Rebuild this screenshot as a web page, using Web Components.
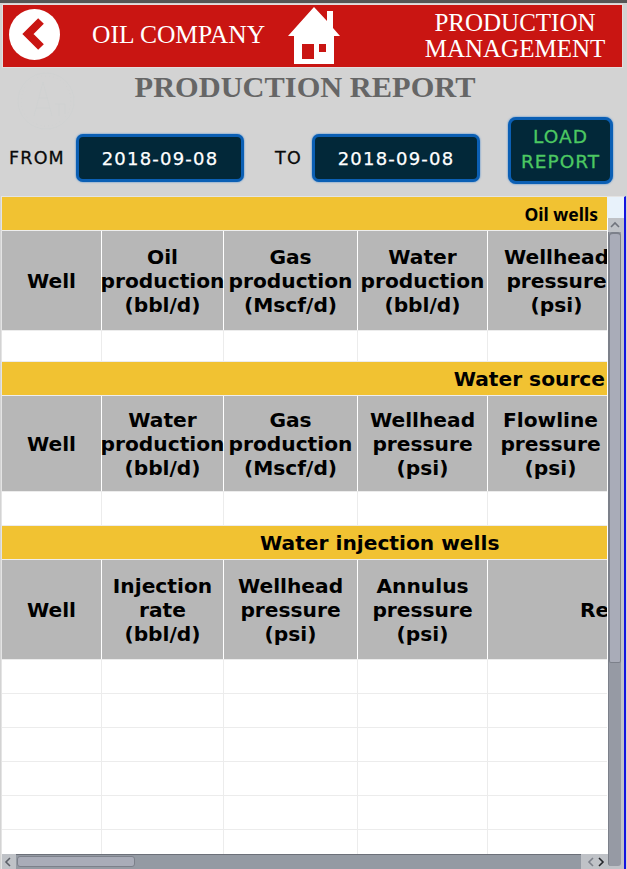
<!DOCTYPE html>
<html>
<head>
<meta charset="utf-8">
<style>
  html, body { margin: 0; padding: 0; height: 869px; overflow: hidden; background: #d3d3d3; }
</style>
</head>
<body>
<report-app></report-app>
<script>
class TopBar extends HTMLElement {
  constructor() {
    super();
    this.attachShadow({mode:'open'}).innerHTML = `
      <style>
        :host { display: grid; grid-template-columns: 283px 56px 1fr; align-items: center; height: 62px; margin: 2px 5px 0 3px; background: #c91512; outline: 1px solid #e4dcdc; color: #fff; font-family: "Liberation Serif", serif; box-sizing: border-box; }
        .left { display: flex; align-items: center; height: 100%; }
        .back { width: 51px; height: 51px; margin: 0 0 3px 6px; flex: none; }
        .name { font-size: 25.5px; white-space: nowrap; margin: 0 0 2px 32px; }
        .home { width: 56px; height: 60px; align-self: start; }
        .title { font-size: 25px; line-height: 26px; text-align: center; padding-left: 66px; white-space: nowrap; }
      </style>
      <div class="left">
        <svg class="back" viewBox="0 0 51 51"><circle cx="25.5" cy="25.5" r="25.5" fill="#fff"/><path d="M32 12 L19 25 L32 38" fill="none" stroke="#c91512" stroke-width="8"/></svg>
        <div class="name">OIL COMPANY</div>
      </div>
      <svg class="home" viewBox="286 5 56 60"><path fill="#fff" d="M314 7 L327 21 V11 H333 V28 L340 36 H334 V64 H294 V36 H288 Z"/><rect x="302" y="44" width="12" height="15" fill="#c91512"/><rect x="319" y="44" width="7" height="8" fill="#c91512"/></svg>
      <div class="title">PRODUCTION<br>MANAGEMENT</div>
    `;
  }
}

class DateBox extends HTMLElement {
  constructor() {
    super();
    this.attachShadow({mode:'open'}).innerHTML = `
      <style>
        :host { display: flex; align-items: center; justify-content: center; box-sizing: border-box; width: 168px; height: 48px; margin-bottom: 2px; flex: none; background: #022839; border: 3px solid #0b5fb4; border-radius: 7px; color: #fff; font-size: 18px; letter-spacing: 1.2px; -webkit-text-stroke: .25px #fff; box-shadow: 0 0 2px #2f7fd0; }
      </style>
      <slot></slot>
    `;
  }
}

class FilterRow extends HTMLElement {
  constructor() {
    super();
    this.attachShadow({mode:'open'}).innerHTML = `
      <style>
        :host { display: flex; align-items: flex-end; height: 67px; margin-top: 12px; padding-left: 9px; font-family: "DejaVu Sans", sans-serif; }
        .lbl { box-sizing: border-box; display: flex; align-items: center; height: 48px; margin-bottom: 2px; font-size: 17.5px; letter-spacing: 1.2px; color: #0a0a0a; -webkit-text-stroke: .3px #0a0a0a; }
        .from { width: 67px; }
        .to { width: 68px; padding-left: 31px; }
        .load { box-sizing: border-box; width: 105px; height: 67px; margin-left: 28px; background: #022839; border: 3px solid #0b5fb4; border-radius: 8px; box-shadow: 0 0 2px #2f7fd0; color: #4cc862; font-size: 18.5px; line-height: 25px; letter-spacing: 1px; text-align: center; padding-top: 4px; -webkit-text-stroke: .3px #4cc862; }
      </style>
      <span class="lbl from">FROM</span>
      <date-box>2018-09-08</date-box>
      <span class="lbl to">TO</span>
      <date-box>2018-09-08</date-box>
      <div class="load">LOAD<br>REPORT</div>
    `;
  }
}

// one titled block: yellow band, grey head row, blank rows
class ReportTable extends HTMLElement {
  constructor() {
    super();
    this.attachShadow({mode:'open'});
  }
  connectedCallback() {
    const cols = JSON.parse(this.getAttribute('cols'));
    const rows = Number(this.getAttribute('rows') || 1);
    const rowH = this.getAttribute('row-height') || '33';
    const headH = this.getAttribute('head-height') || '99';
    const last = this.getAttribute('last-width') || '137';
    const widths = [99, 121, 133, 129, last];
    const tpl = widths.map(w => w + 'px').join(' ');
    let body = '';
    for (let r = 0; r < rows; r++) {
      body += `<div class="row">${widths.map(() => '<div class="cell"></div>').join('')}</div>`;
    }
    this.shadowRoot.innerHTML = `
      <style>
        :host { display: block; width: 605px; overflow: hidden; background: #ececec; padding-bottom: 1px; }
        .band { height: 33px; background: #f1c232; display: flex; align-items: center; justify-content: var(--band-align, flex-end); padding: var(--band-pad, 0 2px 0 0); font: var(--band-font, bold 20.2px "DejaVu Sans", sans-serif); color: #000; white-space: nowrap; box-sizing: border-box; }
        .head, .row { display: grid; grid-template-columns: ${tpl}; column-gap: 1px; width: max-content; }
        .head { height: ${headH}px; background: #fff; border-top: 1px solid #eee; }
        .th { background: #b7b7b7; display: flex; align-items: center; justify-content: center; text-align: center; font: bold 20.2px/24px "DejaVu Sans", sans-serif; color: #000; white-space: nowrap; }
        .th.pushed { justify-content: flex-start; padding-left: 92px; }
        .row { height: ${rowH}px; background: #ececec; padding-top: 1px; }
        .cell { background: #fff; }
      </style>
      <div class="band"><slot></slot></div>
      <div class="head">${cols.map((c, i) => `<div class="th${i === 4 && this.hasAttribute('push-last') ? ' pushed' : ''}">${c}</div>`).join('')}</div>
      ${body}
    `;
  }
}

class FakeScrollbars extends HTMLElement {
  constructor() {
    super();
    this.attachShadow({mode:'open'}).innerHTML = `
      <style>
        :host { display: block; position: absolute; inset: 0; pointer-events: none; }
        .corner { position: absolute; left: 605px; top: 0; width: 17px; height: 21px; background: #e8f2fb; }
        .v { position: absolute; left: 606px; top: 21px; width: 16px; bottom: 0; background: #bfc2c7; }
        .vtrack { position: absolute; left: 0; top: 14px; width: 13px; bottom: 3px; background: #969aa4; border-left: 1px solid #7c808a; border-radius: 0 0 3px 3px; box-sizing: border-box; }
        .thumb { position: absolute; left: 1px; top: 14px; width: 12px; height: 431px; background: #a9acb8; border: 1px solid #7c808a; border-top-width: 2px; border-radius: 4px 4px 2px 2px; box-sizing: border-box; }
        .h { position: absolute; left: 0; width: 606px; bottom: 0; height: 15px; background: #949aa3; border-top: 1px solid #6c7079; box-sizing: border-box; }
        .hthumb { position: absolute; left: 15px; top: 1px; width: 118px; height: 11px; background: #a9acb8; border: 1px solid #7c808a; border-radius: 3px; box-sizing: border-box; }
        .cap { position: absolute; top: -1px; bottom: 0; background: #bfc2c7; }
        svg { position: absolute; fill: none; stroke-width: 1.6; }
      </style>
      <div class="corner"></div>
      <div class="v">
        <svg style="left:2px;top:3px" width="10" height="7" viewBox="0 0 10 7" stroke="#6f737c"><path d="M1 6 L5 2 L9 6"/></svg>
        <div class="vtrack"></div>
        <div class="thumb"></div>
      </div>
      <div class="h">
        <div class="cap" style="left:0;width:14px"><svg style="left:2px;top:3px" width="7" height="10" viewBox="0 0 7 10" stroke="#5c6068"><path d="M6 1 L2 5 L6 9"/></svg></div>
        <div class="hthumb"></div>
        <div class="cap" style="left:579px;width:27px">
          <svg style="left:6px;top:3px" width="7" height="10" viewBox="0 0 7 10" stroke="#7c808a"><path d="M6 1 L2 5 L6 9"/></svg>
          <svg style="left:17px;top:3px" width="7" height="10" viewBox="0 0 7 10" stroke="#24262b"><path d="M1 1 L5 5 L1 9"/></svg>
        </div>
      </div>
    `;
  }
}

class ReportApp extends HTMLElement {
  constructor() {
    super();
    this.attachShadow({mode:'open'}).innerHTML = `
      <style>
        :host { display: block; position: relative; width: 627px; height: 869px; overflow: hidden; background: #d3d3d3; border-top: 3px solid #555; box-sizing: border-box; }
        h1 { margin: 3px 0 0; height: 35px; font: bold 30.4px/35px "Liberation Serif", serif; color: #666; text-align: center; padding-right: 17px; }
        .seal { position: absolute; left: 15px; top: 67px; width: 62px; height: 64px; fill: none; stroke: #cfd1d1; stroke-width: .7; }
        .data { position: absolute; left: 1px; top: 193px; width: 625px; bottom: 0; background: #fff; border-top: 1px solid #e4e4e4; border-left: 1px solid #e4e4e4; border-right: 2px solid #1414e0; box-sizing: border-box; }
      </style>
      <top-bar></top-bar>
      <svg class="seal" viewBox="0 0 62 64"><circle cx="31" cy="31" r="28"/><circle cx="31" cy="31" r="25" stroke-dasharray="1 3"/><path d="M28 12 L19 46 M28 12 L37 46 M24 28 H33 M21 38 H35 M40 34 H50 V44 M44 34 V46"/></svg>
      <h1>PRODUCTION REPORT</h1>
      <filter-row></filter-row>
      <div class="data">
        <report-table row-height="30" style="--band-pad:0 9px 0 0;--band-font:bold 17.5px 'Noto Sans', sans-serif" cols='["Well","Oil<br>production<br>(bbl/d)","Gas<br>production<br>(Mscf/d)","Water<br>production<br>(bbl/d)","Wellhead<br>pressure<br>(psi)"]'>Oil wells</report-table>
        <report-table head-height="95" last-width="125" cols='["Well","Water<br>production<br>(bbl/d)","Gas<br>production<br>(Mscf/d)","Wellhead<br>pressure<br>(psi)","Flowline<br>pressure<br>(psi)"]'>Water source</report-table>
        <report-table push-last style="--band-align:flex-start;--band-pad:0 0 0 258px" rows="6" last-width="200" cols='["Well","Injection<br>rate<br>(bbl/d)","Wellhead<br>pressure<br>(psi)","Annulus<br>pressure<br>(psi)","Re"]'>Water injection wells</report-table>
        <fake-scrollbars></fake-scrollbars>
      </div>
    `;
  }
}

customElements.define('top-bar', TopBar);
customElements.define('date-box', DateBox);
customElements.define('filter-row', FilterRow);
customElements.define('report-table', ReportTable);
customElements.define('fake-scrollbars', FakeScrollbars);
customElements.define('report-app', ReportApp);
</script>
</body>
</html>
